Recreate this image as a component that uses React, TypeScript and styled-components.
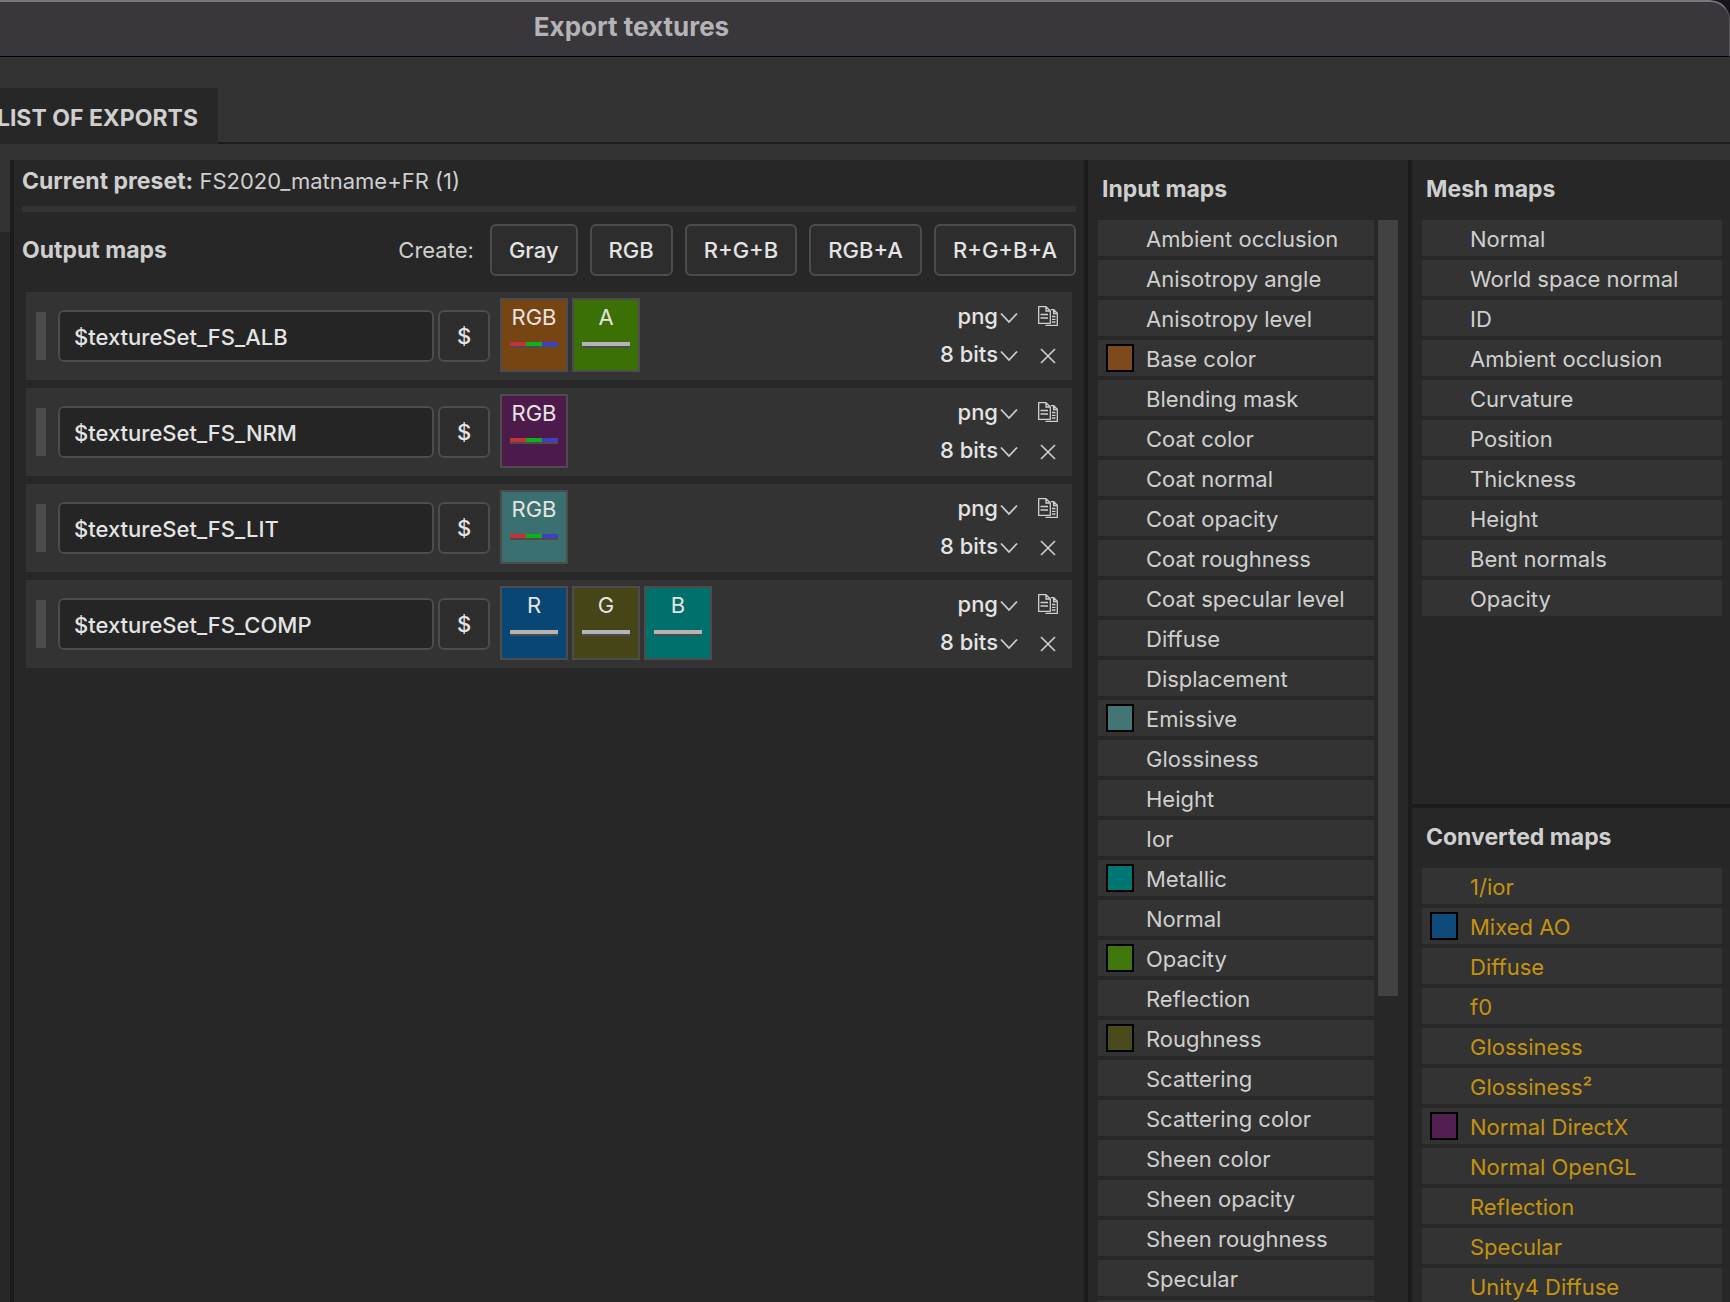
import React from 'react';
import styled, { createGlobalStyle } from 'styled-components';

const GlobalStyle = createGlobalStyle`
  *, *::before, *::after { box-sizing: border-box; }
  body {
    margin: 0;
    background: #17151b;
    color: #cfcfcf;
    font: 400 22px/28px Inter, "Liberation Sans", sans-serif;
  }
  button, input, select { font: inherit; color: inherit; margin: 0; }
  h1, h2, p, ul { margin: 0; padding: 0; font: inherit; }
`;

const Window = styled.div`
  height: 100vh;
  display: flex;
  flex-direction: column;
  overflow: hidden;
  background: #333333;
  border-top-right-radius: 20px;
`;

const TitleBar = styled.header`
  flex: none;
  height: 57px;
  display: flex;
  align-items: center;
  justify-content: center;
  padding: 0 466px 4px 0;
  background: #39373c;
  border-top: 2px solid #77767b;
  border-right: 1px solid #5a585e;
  border-bottom: 1px solid #000;
  border-top-right-radius: 20px;
`;

const Title = styled.h1`
  color: #b4b3b6;
  font-size: 26px;
  font-weight: 700;
`;

const TabBar = styled.nav`
  flex: none;
  height: 87px;
  display: flex;
  align-items: flex-end;
  overflow: hidden;
`;

const Tab = styled.button`
  flex: none;
  width: 218px;
  height: 56px;
  display: flex;
  align-items: center;
  justify-content: flex-end;
  padding: 4px 20px 0 0;
  border: 0;
  background: #272727;
  font-size: 23px;
  font-weight: 700;
  white-space: nowrap;
`;

const TabRule = styled.div`
  flex: 1;
  border-bottom: 2px solid #1c1c1c;
`;

const Body = styled.div`
  flex: 1;
  min-height: 0;
  display: flex;
  margin-top: 16px;
`;

const PresetList = styled.aside`
  flex: none;
  width: 10px;
  padding-top: 72px;
  background: #333333;
  &::after { content: ''; display: block; height: 100%; background: #272727; }
`;

const Divider = styled.div`
  flex: none;
  width: 4px;
  background: #1c1c1c;
`;

const Main = styled.main`
  flex: 1;
  min-width: 0;
  padding: 7px 8px 0;
  background: #272727;
`;

const Preset = styled.p`
  padding-bottom: 11px;
  border-bottom: 6px solid #333333;
`;

const Strong = styled.strong`
  font-size: 23px;
  font-weight: 700;
`;

const CreateBar = styled.div`
  display: flex;
  align-items: center;
  gap: 12px;
  margin-top: 12px;
`;

const Heading = styled.h2`
  font-size: 23px;
  font-weight: 700;
`;

const CreateLabel = styled.span`
  margin: 0 4px 0 auto;
`;

const Button = styled.button<{ $square?: boolean }>`
  flex: none;
  height: 52px;
  width: ${(p) => (p.$square ? '52px' : 'auto')};
  padding: ${(p) => (p.$square ? '0' : '0 17px')};
  border: 2px solid #4c4c4c;
  border-radius: 6px;
  background: #2d2d2d;
  color: #e4e4e4;
  font-weight: 500;
`;

const OutputList = styled.ul`
  display: grid;
  gap: 8px;
  margin: 16px 4px 0;
  list-style: none;
`;

const OutputRow = styled.li`
  height: 88px;
  display: flex;
  align-items: center;
  gap: 4px;
  padding: 0 14px 0 10px;
  background: #333333;
`;

const Grip = styled.span`
  width: 10px;
  height: 48px;
  margin-right: 8px;
  background: #4c4c4c;
`;

const NameInput = styled.input`
  width: 376px;
  height: 52px;
  padding: 2px 14px 0;
  border: 2px solid #4c4c4c;
  border-radius: 6px;
  background: #252525;
  color: #e4e4e4;
  font-weight: 500;
`;

const Chips = styled.div`
  display: flex;
  gap: 4px;
  margin-left: 6px;
  align-self: flex-start;
  padding-top: 6px;
`;

const Chip = styled.button<{ $color: string }>`
  width: 68px;
  height: 74px;
  display: flex;
  flex-direction: column;
  align-items: center;
  gap: 11px;
  padding: 3px 0 0;
  border: 2px solid #4c4c4c;
  background: ${(p) => p.$color};
  color: #e8e4e0;
`;

const ChipBar = styled.span<{ $rgb: boolean }>`
  width: 48px;
  height: 6px;
  border-bottom: 2px solid #4c4c4c;
  background: ${(p) =>
    p.$rgb
      ? 'linear-gradient(90deg, #c43235 0 16px, #0eb11c 16px 32px, #403fc0 32px)'
      : '#b4b4b4'};
`;

const Options = styled.div`
  display: grid;
  grid-template-columns: 90px 20px;
  column-gap: 20px;
  row-gap: 10px;
  align-items: center;
  margin: 0 0 2px auto;
`;

const SelectBox = styled.label`
  display: flex;
  align-items: center;
  gap: 2px;
  svg { margin-top: 4px; }
`;

const Select = styled.select`
  flex: 1;
  min-width: 0;
  height: 28px;
  padding: 0;
  border: 0;
  appearance: none;
  background: none;
  color: #e4e4e4;
  font-weight: 500;
  text-align-last: right;
`;

const IconButton = styled.button<{ $low?: boolean }>`
  height: 28px;
  display: flex;
  align-items: center;
  justify-content: center;
  padding: ${(p) => (p.$low ? '4px 0 0' : '0')};
  border: 0;
  background: none;
  color: #cfcfcf;
`;

const InputPanel = styled.section`
  flex: none;
  width: 320px;
  display: flex;
  flex-direction: column;
  padding: 15px 10px 0;
  overflow: hidden;
  background: #272727;
`;

const SidePanels = styled.div`
  flex: none;
  width: 318px;
  display: grid;
  grid-template-rows: minmax(0, 1fr) 494px;
  gap: 4px;
  background: #1c1c1c;
`;

const SidePanel = styled.section`
  padding: 15px 8px 0 10px;
  overflow: hidden;
  background: #272727;
`;

const PanelHeading = styled(Heading)`
  padding: 0 4px 17px;
`;

const Scroller = styled.div`
  display: flex;
  gap: 4px;
`;

const ScrollThumb = styled.div`
  width: 20px;
  height: 776px;
  background: #424242;
`;

const MapList = styled.ul<{ $tone?: string }>`
  flex: 1;
  display: grid;
  align-content: start;
  gap: 4px;
  list-style: none;
  color: ${(p) => p.$tone ?? '#cfcfcf'};
`;

const MapRow = styled.li`
  height: 36px;
  display: flex;
  align-items: center;
  gap: 12px;
  padding: 0 8px;
  background: #333333;
  white-space: nowrap;
`;

const MapName = styled.span`
  padding-top: 2px;
`;

const Swatch = styled.span<{ $color?: string }>`
  flex: none;
  width: 28px;
  height: 28px;
  border: 2px solid ${(p) => (p.$color ? '#000' : 'transparent')};
  background: ${(p) => p.$color ?? 'none'};
`;

const Chevron = () => (
  <svg width="18" height="12" viewBox="0 0 18 12" fill="none" stroke="#cfcfcf" strokeWidth="1.8" aria-hidden="true">
    <path d="M1 1.5 9 10 17 1.5" />
  </svg>
);

const CopyIcon = () => (
  <svg width="20" height="20" viewBox="0 0 20 20" fill="none" stroke="currentColor" strokeWidth="1.3" aria-hidden="true">
    <path d="M8 .7H.7v16.6h11.6V5L8 .7V5h4.3M2.5 8.5h7.5M2.5 12h7.5" />
    <path d="M12.8 3.7h3l3.5 3.5v12.1H7.5M15.6 3.9v3.6h3.6M14 10.5h3.5M14 13.3h3.5M14 16h3.5" />
  </svg>
);

const CloseIcon = () => (
  <svg width="16" height="16" viewBox="0 0 16 16" fill="none" stroke="currentColor" strokeWidth="1.6" aria-hidden="true">
    <path d="M1 1l14 14M15 1 1 15" />
  </svg>
);

const COLORS = {
  base: '#7d4a1b',
  emissive: '#427676',
  metallic: '#007672',
  opacity: '#41760e',
  roughness: '#4a4a1c',
  ao: '#0e4b7a',
  normal: '#511f50',
};

const OUTPUTS = [
  { name: '$textureSet_FS_ALB', chips: [['RGB', '#774512'], ['A', '#3b7006']] },
  { name: '$textureSet_FS_NRM', chips: [['RGB', '#4d1b4b']] },
  { name: '$textureSet_FS_LIT', chips: [['RGB', '#3b7070']] },
  { name: '$textureSet_FS_COMP', chips: [['R', '#084775'], ['G', '#454517'], ['B', '#00706c']] },
];

type MapItem = [name: string, color?: string];

const INPUT_MAPS: MapItem[] = [
  ['Ambient occlusion'], ['Anisotropy angle'], ['Anisotropy level'], ['Base color', COLORS.base],
  ['Blending mask'], ['Coat color'], ['Coat normal'], ['Coat opacity'], ['Coat roughness'],
  ['Coat specular level'], ['Diffuse'], ['Displacement'], ['Emissive', COLORS.emissive],
  ['Glossiness'], ['Height'], ['Ior'], ['Metallic', COLORS.metallic], ['Normal'],
  ['Opacity', COLORS.opacity], ['Reflection'], ['Roughness', COLORS.roughness], ['Scattering'],
  ['Scattering color'], ['Sheen color'], ['Sheen opacity'], ['Sheen roughness'], ['Specular'], [''],
];

const MESH_MAPS: MapItem[] = [
  ['Normal'], ['World space normal'], ['ID'], ['Ambient occlusion'], ['Curvature'],
  ['Position'], ['Thickness'], ['Height'], ['Bent normals'], ['Opacity'],
];

const CONVERTED_MAPS: MapItem[] = [
  ['1/ior'], ['Mixed AO', COLORS.ao], ['Diffuse'], ['f0'], ['Glossiness'], ['Glossiness²'],
  ['Normal DirectX', COLORS.normal], ['Normal OpenGL'], ['Reflection'], ['Specular'], ['Unity4 Diffuse'],
];

const Maps = ({ items, tone }: { items: MapItem[]; tone?: string }) => (
  <MapList $tone={tone}>
    {items.map(([name, color]) => (
      <MapRow key={name}>
        <Swatch $color={color} />
        <MapName>{name}</MapName>
      </MapRow>
    ))}
  </MapList>
);

export default function App() {
  return (
    <>
      <GlobalStyle />
      <Window>
        <TitleBar>
          <Title>Export textures</Title>
        </TitleBar>
        <TabBar>
          <Tab>LIST OF EXPORTS</Tab>
          <TabRule />
        </TabBar>
        <Body>
          <PresetList />
          <Divider />
          <Main>
            <Preset>
              <Strong>Current preset:</Strong> FS2020_matname+FR (1)
            </Preset>
            <CreateBar>
              <Heading>Output maps</Heading>
              <CreateLabel>Create:</CreateLabel>
              {['Gray', 'RGB', 'R+G+B', 'RGB+A', 'R+G+B+A'].map((kind) => (
                <Button key={kind}>{kind}</Button>
              ))}
            </CreateBar>
            <OutputList>
              {OUTPUTS.map(({ name, chips }) => (
                <OutputRow key={name}>
                  <Grip />
                  <NameInput aria-label="Output name" defaultValue={name} />
                  <Button $square>$</Button>
                  <Chips>
                    {chips.map(([label, color]) => (
                      <Chip key={label} $color={color}>
                        {label}
                        <ChipBar $rgb={label === 'RGB'} />
                      </Chip>
                    ))}
                  </Chips>
                  <Options>
                    <SelectBox>
                      <Select aria-label="File format"><option>png</option></Select>
                      <Chevron />
                    </SelectBox>
                    <IconButton aria-label="Duplicate"><CopyIcon /></IconButton>
                    <SelectBox>
                      <Select aria-label="Bit depth"><option>8 bits</option></Select>
                      <Chevron />
                    </SelectBox>
                    <IconButton $low aria-label="Remove"><CloseIcon /></IconButton>
                  </Options>
                </OutputRow>
              ))}
            </OutputList>
          </Main>
          <Divider />
          <InputPanel>
            <PanelHeading>Input maps</PanelHeading>
            <Scroller>
              <Maps items={INPUT_MAPS} />
              <ScrollThumb />
            </Scroller>
          </InputPanel>
          <Divider />
          <SidePanels>
            <SidePanel>
              <PanelHeading>Mesh maps</PanelHeading>
              <Maps items={MESH_MAPS} />
            </SidePanel>
            <SidePanel>
              <PanelHeading>Converted maps</PanelHeading>
              <Maps items={CONVERTED_MAPS} tone="#c4930f" />
            </SidePanel>
          </SidePanels>
        </Body>
      </Window>
    </>
  );
}
